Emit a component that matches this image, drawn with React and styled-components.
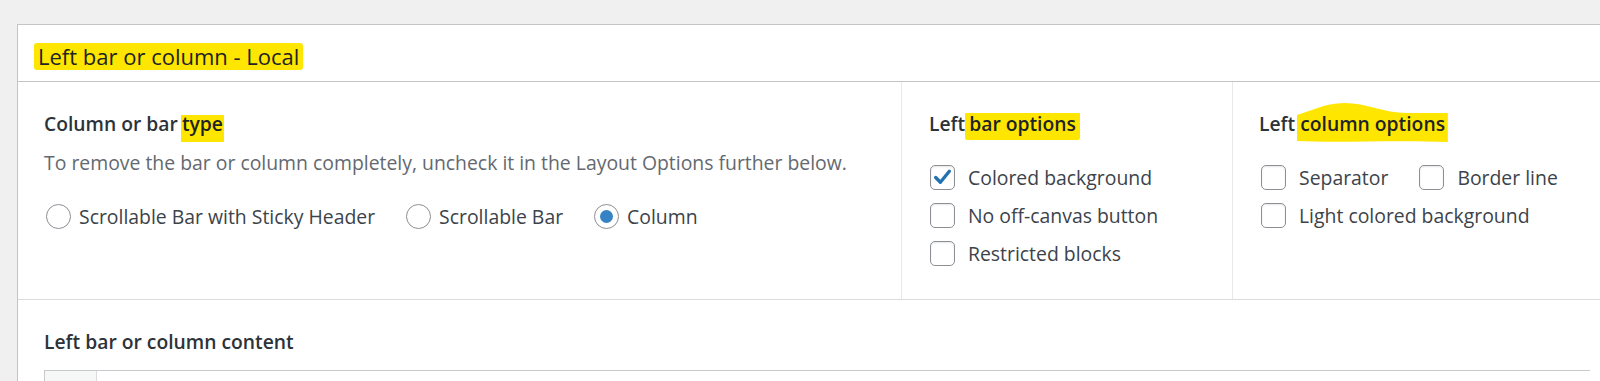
import React from "react";
import styled, { createGlobalStyle } from "styled-components";

const Global = createGlobalStyle`
  html, body { margin: 0; padding: 0; background: #f0f0f1; }
  body { font-family: "Open Sans", "Noto Sans", sans-serif; color: #3c434a; }
  * { box-sizing: border-box; }
`;

const Page = styled.div`
  width: 1600px;
  height: 381px;
  overflow: hidden;
  padding: 24px 0 0 17px;
`;

const Panel = styled.section`
  width: 1600px;
  background: #fff;
  border: 1px solid #c3c4c7;
`;

const Header = styled.div`
  height: 57px;
  display: flex;
  align-items: center;
  padding: 6px 0 0 16px;
  border-bottom: 1px solid #c3c4c7;
`;

const Title = styled.h2`
  margin: 0;
  font-size: 22px;
  font-weight: 400;
  color: #1d2327;
  line-height: 27px;
`;

const Mark = styled.span`
  display: inline-block;
  padding: 0 ${(p) => p.$px ?? 2}px ${(p) => p.$pb ?? 0}px;
  margin-bottom: -${(p) => p.$pb ?? 0}px;
  margin-left: ${(p) => p.$ml ?? 0}px;
  border-radius: ${(p) => p.$radius ?? 2}px;
  background: linear-gradient(#ffe600, #ffe600) no-repeat 0 ${(p) => p.$pt ?? 0}px /
    100% calc(100% - ${(p) => p.$pt ?? 0}px);
  color: #1d2327;
`;

const WaveWrap = styled.span`
  position: relative;
  display: inline-block;
  z-index: 0;
  color: #1d2327;
`;

const WaveSvg = styled.svg`
  position: absolute;
  left: -3px;
  top: -9px;
  width: calc(100% + 6px);
  height: 39px;
  z-index: -1;
`;

const Columns = styled.div`
  display: grid;
  grid-template-columns: 883px 331px 1fr;
  height: 218px;
  border-bottom: 1px solid #dcdcde;
`;

const Col = styled.div`
  padding: 30px ${(p) => p.$pad ?? 26}px 0;
  border-left: ${(p) => (p.$first ? "none" : "1px solid #e8e8e8")};
`;

const Heading = styled.h3`
  margin: 0;
  font-size: 19.3px;
  font-weight: 600;
  line-height: 24px;
  height: 24px;
  color: #2c3338;
`;

const Desc = styled.p`
  margin: 15px 0 0;
  font-size: 19.4px;
  line-height: 24px;
  color: #646970;
  white-space: nowrap;
`;

const RadioRow = styled.div`
  display: flex;
  align-items: center;
  gap: 31px;
  margin-top: 29px;
  padding-left: 2px;
`;

const Option = styled.label`
  display: flex;
  align-items: center;
  gap: 8px;
  font-size: 19.4px;
  line-height: 25px;
  color: #3c434a;
  white-space: nowrap;
`;

const Radio = styled.span`
  width: 25px;
  height: 25px;
  border-radius: 50%;
  border: 1px solid #8c8f94;
  display: flex;
  align-items: center;
  justify-content: center;
  flex-shrink: 0;
  &::after {
    content: "";
    width: 13px;
    height: 13px;
    border-radius: 50%;
    background: ${(p) => (p.$on ? "#3582c4" : "transparent")};
  }
`;

const CheckList = styled.div`
  display: flex;
  flex-wrap: wrap;
  flex-direction: ${(p) => (p.$wrap ? "row" : "column")};
  column-gap: 31px;
  row-gap: 13px;
  margin-top: 29px;
  padding-left: ${(p) => p.$indent ?? 1}px;
`;

const Box = styled.span`
  width: 25px;
  height: 25px;
  border-radius: 5px;
  border: 1px solid #8c8f94;
  display: flex;
  align-items: center;
  justify-content: center;
  flex-shrink: 0;
  margin-right: 5px;
  box-shadow: inset 0 1px 2px rgba(0, 0, 0, 0.1);
`;

const Lower = styled.div`
  padding: 30px 26px 0;
  height: 90px;
`;

const Editor = styled.div`
  margin-top: 16px;
  height: 40px;
  border: 1px solid #c8c9cc;
  border-right: none;
  display: flex;
`;

const Gutter = styled.div`
  width: 52px;
  background: #f6f7f7;
  border-right: 1px solid #dcdcde;
`;

const Check = () => (
  <svg width="21" height="21" viewBox="0 0 20 20">
    <path d="M3.5 10 L8 14.5 L16.5 4" fill="none" stroke="#2271b1" strokeWidth="3.2" strokeLinecap="round" strokeLinejoin="round" />
  </svg>
);

const CheckItem = ({ on, children }) => (
  <Option>
    <Box>{on && <Check />}</Box>
    {children}
  </Option>
);

export default function App() {
  return (
    <>
      <Global />
      <Page>
        <Panel>
          <Header>
            <Title>
              <Mark $px={4} $radius={3}>Left bar or column - Local</Mark>
            </Title>
          </Header>
          <Columns>
            <Col $first>
              <Heading>
                Column or bar <Mark $px={1} $radius={0} $pt={3} $pb={6} $ml={-2}>type</Mark>
              </Heading>
              <Desc>To remove the bar or column completely, uncheck it in the Layout Options further below.</Desc>
              <RadioRow>
                <Option><Radio />Scrollable Bar with Sticky Header</Option>
                <Option><Radio />Scrollable Bar</Option>
                <Option><Radio $on />Column</Option>
              </RadioRow>
            </Col>
            <Col $pad={27}>
              <Heading>
                Left <Mark $px={4} $pt={1} $pb={4} $ml={-5}>bar options</Mark>
              </Heading>
              <CheckList>
                <CheckItem on>Colored background</CheckItem>
                <CheckItem>No off-canvas button</CheckItem>
                <CheckItem>Restricted blocks</CheckItem>
              </CheckList>
            </Col>
            <Col>
              <Heading>
                Left{" "}
                <WaveWrap>
                  <WaveSvg viewBox="0 0 154 39" preserveAspectRatio="none">
                    <path
                      d="M0 12 C12 9 28 0 48 0 C72 0 88 10 112 10 L154 10 L154 39 C100 37 40 40 0 38 Z"
                      fill="#ffe600"
                    />
                  </WaveSvg>
                  column options
                </WaveWrap>
              </Heading>
              <CheckList $wrap $indent={2}>
                <CheckItem>Separator</CheckItem>
                <CheckItem>Border line</CheckItem>
                <CheckItem>Light colored background</CheckItem>
              </CheckList>
            </Col>
          </Columns>
          <Lower>
            <Heading>Left bar or column content</Heading>
            <Editor>
              <Gutter />
            </Editor>
          </Lower>
        </Panel>
      </Page>
    </>
  );
}
